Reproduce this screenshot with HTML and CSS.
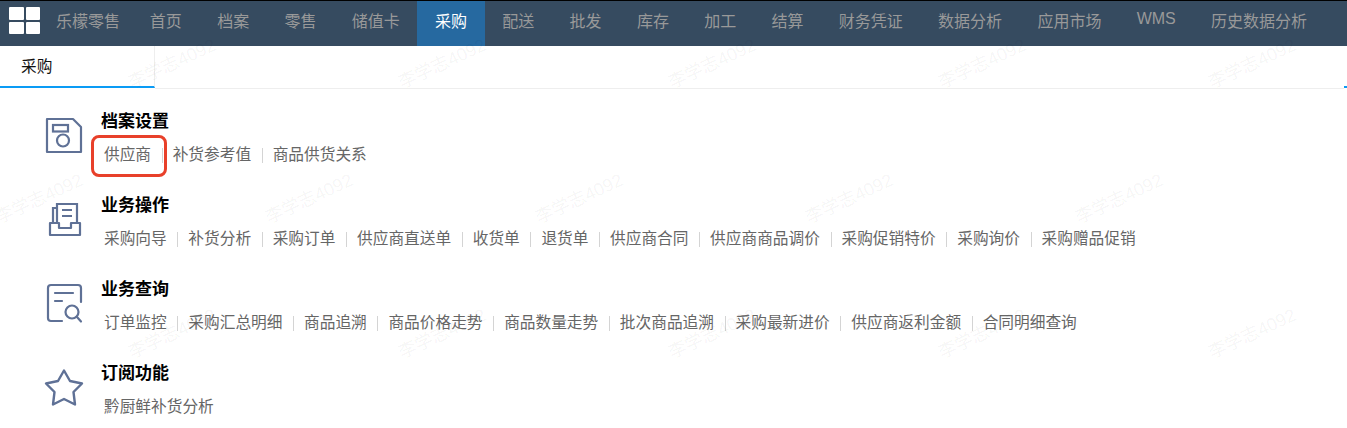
FILE: index.html
```html
<!DOCTYPE html>
<html lang="zh-CN">
<head>
<meta charset="utf-8">
<title>采购</title>
<link rel="stylesheet" href="styles.css">
</head>
<body>
<header class="topbar">
  <div class="logo"><i></i><i></i><i></i><i></i></div>
  <div class="brand">乐檬零售</div>
  <nav class="nav">
    <a>首页</a><a>档案</a><a>零售</a><a>储值卡</a><a class="active">采购</a><a>配送</a><a>批发</a><a>库存</a><a>加工</a><a>结算</a><a>财务凭证</a><a>数据分析</a><a>应用市场</a><a class="latin">WMS</a><a>历史数据分析</a>
  </nav>
</header>
<div class="tabs">
  <div class="tab">采购</div>
  <div class="tab-rest"></div>
  <div class="tab-end"></div>
</div>
<main class="content">
  <section class="group">
    <svg class="icon" viewBox="0 0 38 38" fill="none" stroke="#5f7196" stroke-width="2.2">
      <path d="M2 2H28L36 10V35H2Z" stroke-linejoin="round"/>
      <rect x="8" y="8" width="15" height="6.5"/>
      <circle cx="18" cy="23.5" r="6"/>
    </svg>
    <div class="body">
      <h2>档案设置</h2>
      <ul class="links">
        <li class="marked">供应商</li><li>补货参考值</li><li>商品供货关系</li>
      </ul>
    </div>
  </section>
  <section class="group">
    <svg class="icon" viewBox="0 0 38 38" fill="none" stroke="#5f7196" stroke-width="2.2">
      <path d="M12 22V3H32V22"/>
      <path d="M12 7H8V22"/>
      <path d="M17 9H27M17 15H27"/>
      <path d="M5 22V34H35V22H26V27H14V22Z" stroke-linejoin="round"/>
    </svg>
    <div class="body">
      <h2>业务操作</h2>
      <ul class="links">
        <li>采购向导</li><li>补货分析</li><li>采购订单</li><li>供应商直送单</li><li>收货单</li><li>退货单</li><li>供应商合同</li><li>供应商商品调价</li><li>采购促销特价</li><li>采购询价</li><li>采购赠品促销</li>
      </ul>
    </div>
  </section>
  <section class="group">
    <svg class="icon" viewBox="0 0 38 38" fill="none" stroke="#5f7196" stroke-width="2.2" stroke-linecap="round">
      <path d="M17 36H6Q3 36 3 33V3Q3 0 6 0H33Q36 0 36 3V17"/>
      <path d="M10 8H28M10 16H17"/>
      <circle cx="27" cy="27" r="6.5"/>
      <path d="M32 32L36 36.5"/>
    </svg>
    <div class="body">
      <h2>业务查询</h2>
      <ul class="links">
        <li>订单监控</li><li>采购汇总明细</li><li>商品追溯</li><li>商品价格走势</li><li>商品数量走势</li><li>批次商品追溯</li><li>采购最新进价</li><li>供应商返利金额</li><li>合同明细查询</li>
      </ul>
    </div>
  </section>
  <section class="group">
    <svg class="icon" viewBox="0 0 38 38" fill="none" stroke="#5f7196" stroke-width="2.4">
      <path d="M19 1.5L25 12L37 14.5L28.5 23L30 35.5L19 30L8 35.5L9.5 23L1 14.5L13 12Z" stroke-linejoin="round"/>
    </svg>
    <div class="body">
      <h2>订阅功能</h2>
      <ul class="links">
        <li>黔厨鲜补货分析</li>
      </ul>
    </div>
  </section>
</main>
<div class="watermarks" aria-hidden="true">
  <div class="wm-row"><span>李学志4092</span><span>李学志4092</span><span>李学志4092</span><span>李学志4092</span><span>李学志4092</span></div>
  <div class="wm-row shifted"><span>李学志4092</span><span>李学志4092</span><span>李学志4092</span><span>李学志4092</span><span>李学志4092</span></div>
  <div class="wm-row"><span>李学志4092</span><span>李学志4092</span><span>李学志4092</span><span>李学志4092</span><span>李学志4092</span></div>
</div>
</body>
</html>
```
FILE: styles.css
```css
*, *::before, *::after { box-sizing: border-box; }
html, body { margin: 0; padding: 0; }
body {
  width: 1347px;
  height: 428px;
  overflow: hidden;
  position: relative;
  background: #fff;
  font-family: "Liberation Sans", "Noto Sans CJK SC", sans-serif;
}
.topbar {
  height: 46px;
  display: flex;
  background: #364b60;
  border-top: 1px solid #000;
  padding-left: 9px;
}
.logo {
  width: 31px;
  height: 27px;
  margin-top: 6px;
  display: grid;
  grid-template-columns: 1fr 1fr;
  grid-template-rows: 1fr 1fr;
  gap: 2px;
}
.logo i { background: #fff; border-radius: 1px; }
.brand {
  margin-left: 16px;
  width: 76.2px;
  line-height: 42px;
  font-size: 16px;
  color: #999;
}
.nav { display: flex; }
.nav a {
  padding: 0 17.65px;
  line-height: 42px;
  font-size: 16px;
  color: #999;
  white-space: nowrap;
}
.nav a.active { background: #2669a0; color: #fff; }
.nav a.latin { line-height: 36px; }
.tabs {
  height: 43px;
  display: flex;
}
.tab {
  width: 155px;
  height: 42px;
  padding-left: 21px;
  line-height: 41px;
  font-size: 15.7px;
  color: #111;
  border-right: 1px solid #eee;
  border-bottom: 2px solid #0a9bf5;
}
.tab-rest { flex: 1; border-bottom: 1px solid #eee; }
.tab-end { width: 3px; height: 42px; border-bottom: 2px solid #0a9bf5; }
.content { padding: 20px 0 0 45px; height: 339px; overflow: hidden; }
.group {
  height: 84px;
  display: flex;
  gap: 18px;
}
.icon { width: 38px; height: 38px; margin-top: 8px; flex: none; overflow: visible; }
.body { min-width: 0; }
h2 {
  margin: 0;
  font-size: 17px;
  font-weight: 700;
  line-height: 26px;
  color: #000;
}
.links {
  list-style: none;
  margin: 8px 0 0;
  padding: 0 0 0 3px;
  display: flex;
}
.links li {
  font-size: 15.7px;
  line-height: 24px;
  color: #666;
  white-space: nowrap;
  position: relative;
  margin-right: 21.6px;
}
.links li + li::before {
  content: "";
  position: absolute;
  left: -11px;
  top: 5px;
  height: 15px;
  width: 1px;
  background: #d4d4d4;
}
.marked::after {
  content: "";
  position: absolute;
  left: -13px;
  top: -8px;
  width: 76px;
  height: 42px;
  border: 3px solid #e8402a;
  border-radius: 8px;
}
.watermarks {
  position: absolute;
  left: 0;
  top: -6px;
  width: 1347px;
  height: 405px;
  overflow: hidden;
  pointer-events: none;
}
.wm-row {
  height: 135px;
  display: flex;
  margin-left: 36px;
}
.wm-row.shifted { margin-left: -97px; }
.wm-row span {
  flex: none;
  width: 270px;
  display: flex;
  align-items: center;
  justify-content: center;
  font-size: 18px;
  color: rgba(0, 0, 0, 0.05);
  transform: rotate(-25deg);
}
```
